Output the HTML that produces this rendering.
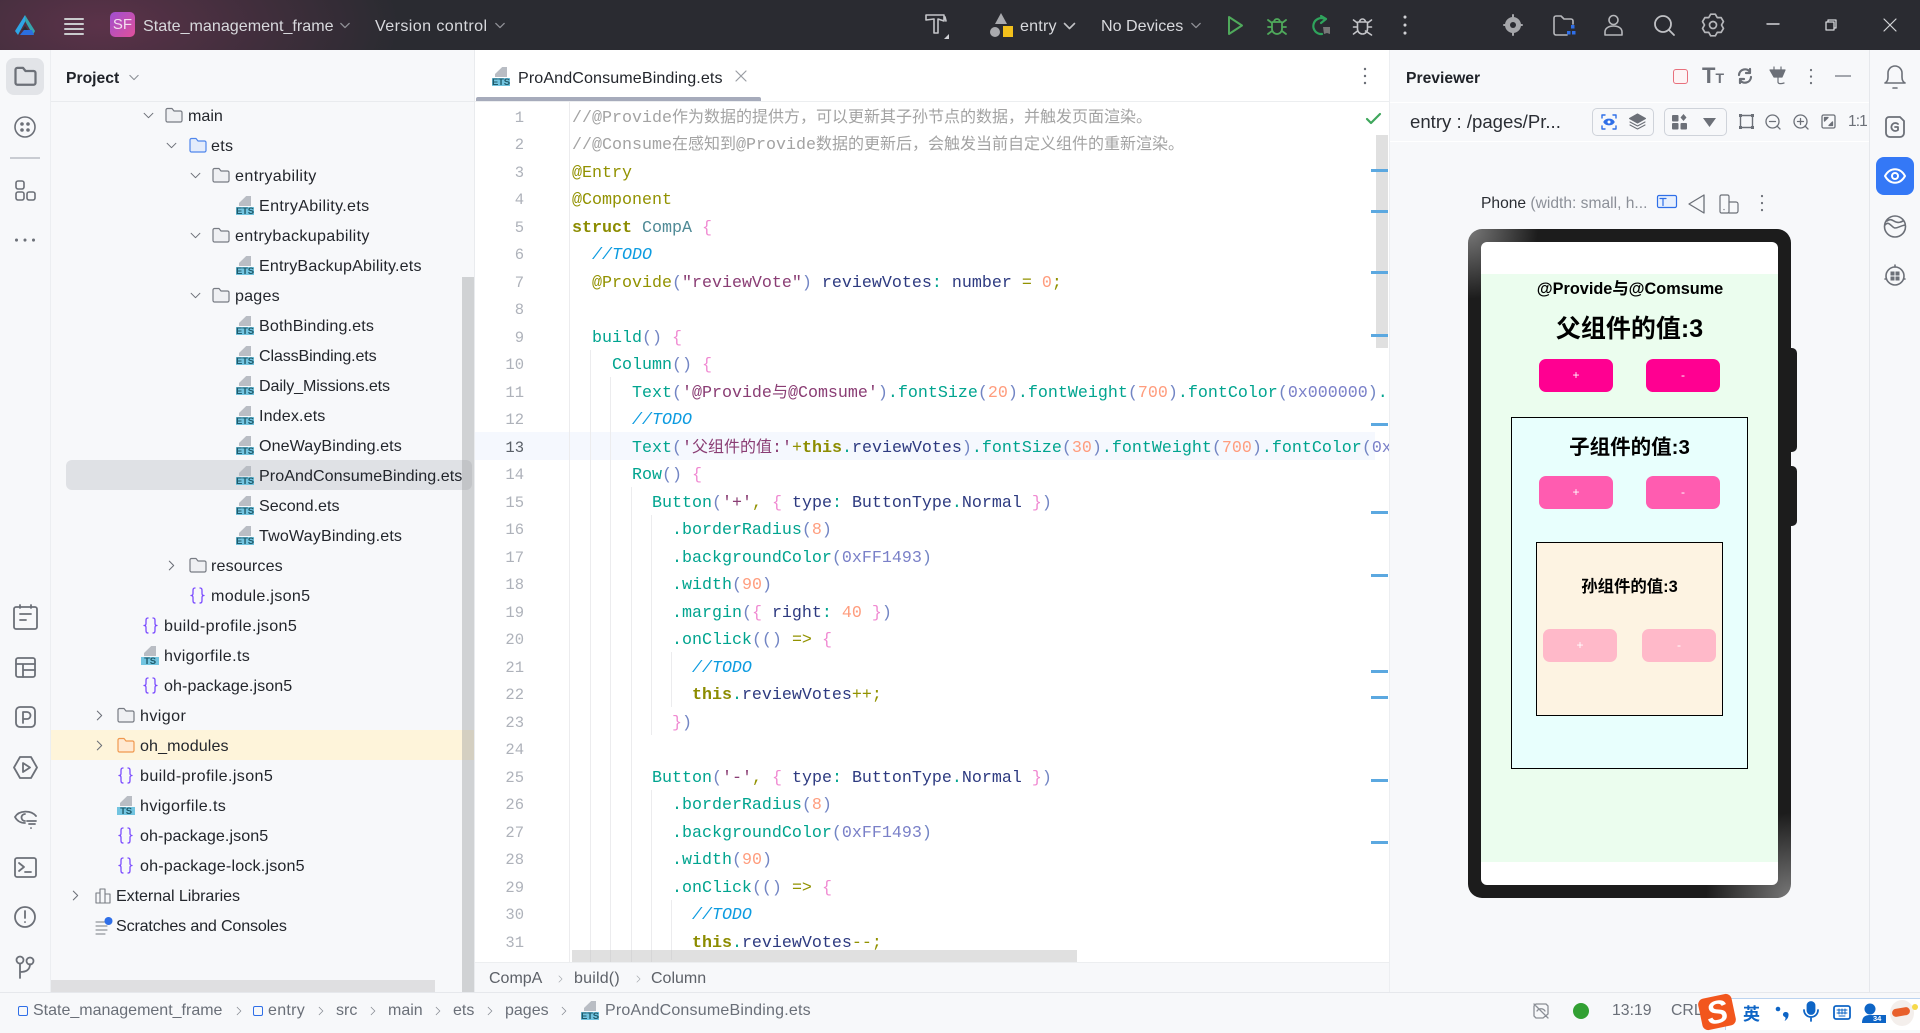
<!DOCTYPE html>
<html><head><meta charset="utf-8"><title>DevEco</title>
<style>
*{box-sizing:border-box}
html,body{margin:0;padding:0;width:1920px;height:1030px;overflow:hidden;background:#f7f8fa;font-family:"Liberation Sans","Noto Sans CJK SC",sans-serif;color:#1f2228}
.a{position:absolute}
svg{position:absolute;overflow:visible;fill:none;stroke:#6c7078;stroke-width:1.6;stroke-linecap:round;stroke-linejoin:round}
.t{position:absolute;height:30px;line-height:30px;font-size:16.1px;white-space:nowrap;color:#23262c}
.w{position:absolute;height:30px;line-height:30px;font-size:16.1px;white-space:nowrap;color:#d8d9dd;top:10.5px}
.ets{position:absolute;width:18px;height:19px;font-style:normal;overflow:hidden}
.ets:before{content:"";position:absolute;left:3px;top:0;width:12px;height:10px;background:#b9bdc4;clip-path:polygon(60% 0,100% 0,100% 100%,0 100%,0 70%)}
.ets b{position:absolute;left:0;top:10.5px;width:18px;height:8.5px;background:#72c4e0;color:#1f5a6a;font-size:9.5px;line-height:9px;text-align:center;font-weight:bold;letter-spacing:-.2px}
#code{position:absolute;left:572px;top:104.5px;width:817px;height:857px;overflow:hidden}
#code div{height:27.5px;line-height:27.5px;font-family:"Liberation Mono","Noto Sans CJK SC",monospace;font-size:16.67px;white-space:pre;color:#2d3a80}
.z{font-size:16px;font-family:"Noto Sans CJK SC",sans-serif;line-height:1}
#code div.g,.g{color:#a3a3a3}#code div.k,.k{color:#929200}.kb{color:#8c8c00;font-weight:bold}.c{color:#00a48f}.p{color:#7285c4}.br{color:#f08ad2}.s{color:#8a3d74}.n{color:#2d3a80}.o{color:#ff9d7e}.h{color:#7a80c8}.i{color:#0c9be0;font-style:italic}.q{color:#4f8a96}
#ln div{position:absolute;left:480px;width:44px;text-align:right;font-family:"Liberation Mono",monospace;font-size:15.5px;height:27.5px;line-height:27.5px;color:#aeb2ba}
#ln{position:absolute;left:0;top:1px}
.ph{position:absolute;text-align:center;font-weight:bold;color:#000;white-space:nowrap}
.btn{position:absolute;border-radius:7px;color:#fff;font-size:12px;text-align:center;line-height:33px;height:33px;width:74px}
.m{position:absolute;left:1371px;width:17px;height:3px;background:#5ba8e0}
.bc{position:absolute;top:996px;height:30px;line-height:30px;font-size:16px;color:#6a6f78;white-space:nowrap}
.gd{position:absolute;width:1px;background:#ececee}
</style></head><body>
<svg width="0" height="0" style="position:absolute">
<symbol id="fo" viewBox="0 0 18 16"><path d="M1 3a1.500 1.500 0 0 1 1.500-1.500h4.500l2 2.500h6.500A1.500 1.500 0 0 1 17 5.500v8a1.500 1.500 0 0 1-1.500 1.500h-13A1.500 1.500 0 0 1 1 13.500z"/></symbol>
<symbol id="js" viewBox="0 0 15 17"><path d="M5 1C3 1 3 2.500 3 4v2.500C3 8 2.200 8.500 1 8.500C2.200 8.500 3 9 3 10.500V13C3 14.500 3 16 5 16M10 1C12 1 12 2.500 12 4v2.500C12 8 12.800 8.500 14 8.500C12.800 8.500 12 9 12 10.500V13C12 14.500 12 16 10 16"/></symbol>
<symbol id="cd" viewBox="0 0 12 8"><path d="M1 1.500l5 5 5-5"/></symbol>
<symbol id="cr" viewBox="0 0 8 12"><path d="M1.500 1l5 5-5 5"/></symbol>
</svg>

<!-- title bar -->
<div class="a" style="left:0;top:0;width:1920px;height:50px;background:radial-gradient(ellipse 300px 130px at 100px 25px,#5b3249 0%,rgba(91,50,73,0) 100%),#2a2b31"></div>
<svg style="left:14px;top:15px;stroke:none" width="22" height="20" viewBox="0 0 22 20"><path fill="#2ea5e6" d="M11 0L1 16l3 4 7-13z"/><path fill="#2fc0c8" d="M11 0l10 16-2 4-8-14z" opacity=".8"/><path fill="#2b6fe0" d="M6 20h14l-2-5H10z"/><path fill="#2a2b31" d="M11 11l3 4H8z"/></svg>
<svg style="left:64px;top:18px;stroke:#c9cacd;stroke-width:2" width="20" height="16"><path d="M1 1h18M1 6h18M1 11h18M1 16h18"/></svg>
<div class="a" style="left:110px;top:12px;width:25px;height:25px;border-radius:5px;background:linear-gradient(135deg,#a04fd0,#e0509a);color:#f4dff0;font-size:15px;line-height:25px;text-align:center">SF</div>
<div class="w" style="left:143px">State_management_frame</div>
<svg style="left:340px;top:22px;stroke:#8f9096" width="10" height="7"><use href="#cd" width="10" height="7"/></svg>
<div class="w" style="left:375px;letter-spacing:.4px">Version control</div>
<svg style="left:495px;top:22px;stroke:#8f9096" width="10" height="7"><use href="#cd" width="10" height="7"/></svg>
<svg style="left:925px;top:13px;stroke:#c4c5c9" width="24" height="26" viewBox="0 0 24 26"><path d="M1 2h18v6M1 2v5l8-1v14h4V6l6 2M20 4l1 4"/><path d="M19 26l5-5v5z" fill="#d0d1d5" stroke="none"/></svg>
<svg style="left:990px;top:12px;stroke:none" width="24" height="26" viewBox="0 0 24 26"><path fill="#a9aaae" d="M11 1l6 11H5z"/><circle cx="5" cy="20" r="5" fill="#a9aaae"/><rect x="13" y="14" width="10" height="11" fill="#f2c01c"/></svg>
<div class="w" style="left:1020px;letter-spacing:.2px">entry</div>
<svg style="left:1063px;top:22px;stroke:#c0c1c5" width="13" height="8"><use href="#cd" width="13" height="8"/></svg>
<div class="w" style="left:1101px">No Devices</div>
<svg style="left:1191px;top:22px;stroke:#8f9096" width="10" height="7"><use href="#cd" width="10" height="7"/></svg>
<svg style="left:1228px;top:16px;stroke:#4fa95b;stroke-width:2" width="16" height="19"><path d="M1 1l13 8.500L1 18z"/></svg>
<svg style="left:1267px;top:14px;stroke:#4fa95b;stroke-width:1.800" width="20" height="22" viewBox="0 0 20 22"><path d="M6 8h8a1 1 0 0 1 1 1v6a5 5 0 0 1-10 0V9a1 1 0 0 1 1-1zM7 8a3 3 0 0 1 6 0M1 6l4 3M19 6l-4 3M1 13h4M15 13h4M1 20l4-3M19 20l-4-3"/></svg>
<svg style="left:1310px;top:15px;stroke:#2fa45c;stroke-width:2.200" width="22" height="21" viewBox="0 0 22 21"><path d="M15 4A8 8 0 1 0 10 19h2"/><path d="M11 1l5 3-5 4" /><path d="M13 12h7v7l-3-1-3 1z" fill="#777" stroke="none"/></svg>
<svg style="left:1352px;top:14px;stroke:#c4c5c9" width="21" height="22" viewBox="0 0 20 22"><path d="M6 8h8a1 1 0 0 1 1 1v6a5 5 0 0 1-10 0V9a1 1 0 0 1 1-1zM7 8a3 3 0 0 1 6 0M1 6l4 3M19 6l-4 3M1 13h4M15 13h4M1 20l4-3M13 17l6 4"/></svg>
<svg style="left:1403px;top:16px;stroke:#d0d1d5;stroke-width:3" width="4" height="18"><path d="M2 1v.1M2 9v.1M2 17v.1"/></svg>
<svg style="left:1503px;top:14px;stroke:#a5a6aa;stroke-width:2" width="20" height="22" viewBox="0 0 20 22"><circle cx="10" cy="11" r="7" fill="#a5a6aa"/><circle cx="10" cy="11" r="3" fill="#2a2b31" stroke="none"/><path d="M10 1v3M10 18v3M1 11h2M17 11h2"/></svg>
<svg style="left:1553px;top:15px;stroke:#b6b7bb" width="24" height="22" viewBox="0 0 24 22"><path d="M14 20H3a2 2 0 0 1-2-2V3a2 2 0 0 1 2-2h5l3 3h7a2 2 0 0 1 2 2v3"/><rect x="18" y="10" width="3.500" height="3.500" fill="#2f6fe8" stroke="none"/><rect x="14" y="16" width="3.500" height="3.500" fill="#2f6fe8" stroke="none"/><rect x="19" y="16" width="3.500" height="3.500" fill="#2f6fe8" stroke="none"/></svg>
<svg style="left:1604px;top:14px;stroke:#b6b7bb" width="19" height="22" viewBox="0 0 19 22"><circle cx="9.500" cy="6" r="4.500"/><path d="M1 21v-3c0-4 4-6 8.500-6s8.500 2 8.500 6v3z"/></svg>
<svg style="left:1653px;top:14px;stroke:#c0c1c5;stroke-width:1.800" width="22" height="22"><circle cx="10" cy="10" r="8"/><path d="M16 16l5 5"/></svg>
<svg style="left:1702px;top:13px;stroke:#b6b7bb;stroke-width:1.700" width="22" height="24" viewBox="0 0 22 24"><path d="M8.700 1.200L13.300 1.200L15.250 4.640L19.170 4.640L21.460 8.600L19.500 12L21.460 15.400L19.170 19.360L15.250 19.360L13.300 22.800L8.700 22.800L6.750 19.360L2.830 19.360L.54 15.400L2.500 12L.54 8.600L2.830 4.640L6.750 4.640z"/><circle cx="11" cy="12" r="3.500"/></svg>
<svg style="left:1767px;top:23px;stroke:#d4d5d9;stroke-width:1.400" width="12" height="2"><path d="M0 1h12"/></svg>
<svg style="left:1825px;top:19px;stroke:#d4d5d9;stroke-width:1.300" width="12" height="12"><path d="M3 3V1h8v8H9M1 3h8v8H1z"/></svg>
<svg style="left:1884px;top:19px;stroke:#d4d5d9;stroke-width:1.200" width="12" height="12"><path d="M0 0l12 12M12 0L0 12"/></svg>

<!-- left rail -->
<div class="a" style="left:50px;top:50px;width:1px;height:943px;background:#eceef1"></div>
<div class="a" style="left:6px;top:58px;width:38px;height:37px;border-radius:8px;background:#e2e4e8"></div>
<svg style="left:14px;top:66px;stroke:#6c7078;stroke-width:1.800" width="23" height="20"><use href="#fo" width="23" height="20"/></svg>
<svg style="left:14px;top:116px" width="22" height="22"><circle cx="11" cy="11" r="10"/><g fill="#6c7078" stroke="none"><circle cx="8" cy="8" r="1.800"/><circle cx="14" cy="8" r="1.800"/><circle cx="8" cy="14" r="1.800"/><circle cx="14" cy="14" r="1.800"/></g></svg>
<div class="a" style="left:10px;top:157px;width:30px;height:2px;background:#c9ccd2"></div>
<svg style="left:15px;top:180px" width="21" height="21"><rect x="1" y="1" width="8" height="8" rx="2"/><rect x="1" y="12" width="8" height="8" rx="2"/><rect x="12" y="12" width="8" height="8" rx="2"/></svg>
<svg style="left:15px;top:238px;stroke-width:3" width="20" height="4"><path d="M1.500 2v.1M10 2v.1M18.500 2v.1"/></svg>
<svg style="left:13px;top:604px;stroke-width:1.800" width="25" height="26"><rect x="1" y="3" width="23" height="22" rx="2"/><path d="M7 1v3M18 1v3M7 10h11M7 16h6"/></svg>
<svg style="left:15px;top:657px;stroke-width:1.800" width="21" height="21"><rect x="1" y="1" width="19" height="19" rx="2"/><path d="M1 7h19M8 7v13M8 13h12"/></svg>
<svg style="left:15px;top:706px;stroke-width:1.800" width="21" height="22"><path d="M5 1h11a4 4 0 0 1 4 4v12a4 4 0 0 1-4 4H5a4 4 0 0 1-4-4V5a4 4 0 0 1 4-4zM8 17V6h4a3 3 0 0 1 0 7H8"/></svg>
<svg style="left:13px;top:756px;stroke-width:1.800" width="25" height="23"><path d="M7 1h11l6 10.500L18 22H7L1 11.500zM10 7l7 4.500-7 4.500z"/></svg>
<svg style="left:14px;top:809px;stroke-width:1.800" width="24" height="20"><path d="M1 8C5 1 17 1 22 7M1 8c2 4 6 6 10 6M11 5a3.500 3.500 0 0 0 0 7M13 12h9M15 15h6M17 19v.1"/></svg>
<svg style="left:14px;top:857px;stroke-width:1.800" width="23" height="21"><rect x="1" y="1" width="21" height="19" rx="2"/><path d="M5 6l5 4-5 4M11 15h6"/></svg>
<svg style="left:14px;top:906px;stroke-width:1.800" width="22" height="22"><circle cx="11" cy="11" r="10"/><path d="M11 5v7M11 16v.1"/></svg>
<svg style="left:15px;top:955px;stroke-width:1.800" width="20" height="24"><circle cx="5" cy="5" r="3.500"/><circle cx="15" cy="6" r="3.500"/><path d="M5 9v14M5 17c6 0 10-2 10-8"/></svg>

<!-- project panel -->
<div class="a" style="left:66px;top:64px;font-weight:bold;font-size:15.7px;line-height:30px;color:#1f2228">Project</div>
<svg style="left:129px;top:74px;stroke:#8c9096;stroke-width:1.300" width="10" height="7"><use href="#cd" width="10" height="7"/></svg>
<div class="a" style="left:51px;top:101px;width:424px;height:1px;background:#e9ebee"></div>
<div class="a" style="left:66px;top:460px;width:406px;height:30px;border-radius:6px;background:#dfe1e5"></div>
<div class="a" style="left:51px;top:730px;width:423px;height:30px;background:#fef4da"></div>
<div class="a" style="left:462px;top:277px;width:12px;height:715px;background:rgba(150,152,156,.4)"></div>
<div class="a" style="left:51px;top:980px;width:384px;height:12px;background:#dfdfe1"></div>
<div class="a" style="left:474px;top:50px;width:1px;height:943px;background:#e9ebee"></div>

<svg style="left:143px;top:112px;stroke:#6c7078;stroke-width:1.200" width="11" height="7"><use href="#cd" width="11" height="7"/></svg>
<svg style="left:165px;top:107px;fill:#eff0f3;stroke:#777b83;stroke-width:1.200" width="18" height="16"><use href="#fo" width="18" height="16"/></svg>
<div class="t" style="left:188px;top:101px">main</div>
<svg style="left:166px;top:142px;stroke:#6c7078;stroke-width:1.200" width="11" height="7"><use href="#cd" width="11" height="7"/></svg>
<svg style="left:189px;top:137px;fill:#e4ecfb;stroke:#4f86ec;stroke-width:1.200" width="18" height="16"><use href="#fo" width="18" height="16"/></svg>
<div class="t" style="left:211px;top:131px;letter-spacing:.3px">ets</div>
<svg style="left:190px;top:172px;stroke:#6c7078;stroke-width:1.200" width="11" height="7"><use href="#cd" width="11" height="7"/></svg>
<svg style="left:212px;top:167px;fill:#eff0f3;stroke:#777b83;stroke-width:1.200" width="18" height="16"><use href="#fo" width="18" height="16"/></svg>
<div class="t" style="left:235px;top:161px;letter-spacing:.4px">entryability</div>
<i class="ets" style="left:236px;top:196px"><b>ETS</b></i>
<div class="t" style="left:259px;top:191px;letter-spacing:.33px">EntryAbility.ets</div>
<svg style="left:190px;top:232px;stroke:#6c7078;stroke-width:1.200" width="11" height="7"><use href="#cd" width="11" height="7"/></svg>
<svg style="left:212px;top:227px;fill:#eff0f3;stroke:#777b83;stroke-width:1.200" width="18" height="16"><use href="#fo" width="18" height="16"/></svg>
<div class="t" style="left:235px;top:221px;letter-spacing:.33px">entrybackupability</div>
<i class="ets" style="left:236px;top:256px"><b>ETS</b></i>
<div class="t" style="left:259px;top:251px;letter-spacing:.17px">EntryBackupAbility.ets</div>
<svg style="left:190px;top:292px;stroke:#6c7078;stroke-width:1.200" width="11" height="7"><use href="#cd" width="11" height="7"/></svg>
<svg style="left:212px;top:287px;fill:#eff0f3;stroke:#777b83;stroke-width:1.200" width="18" height="16"><use href="#fo" width="18" height="16"/></svg>
<div class="t" style="left:235px;top:281px;letter-spacing:.2px">pages</div>
<i class="ets" style="left:236px;top:316px"><b>ETS</b></i><div class="t" style="left:259px;top:311px;letter-spacing:.16px">BothBinding.ets</div>
<i class="ets" style="left:236px;top:346px"><b>ETS</b></i><div class="t" style="left:259px;top:341px;letter-spacing:-.15px">ClassBinding.ets</div>
<i class="ets" style="left:236px;top:376px"><b>ETS</b></i><div class="t" style="left:259px;top:371px;letter-spacing:-.13px">Daily_Missions.ets</div>
<i class="ets" style="left:236px;top:406px"><b>ETS</b></i><div class="t" style="left:259px;top:401px;letter-spacing:.13px">Index.ets</div>
<i class="ets" style="left:236px;top:436px"><b>ETS</b></i><div class="t" style="left:259px;top:431px;letter-spacing:.07px">OneWayBinding.ets</div>
<i class="ets" style="left:236px;top:466px"><b>ETS</b></i><div class="t" style="left:259px;top:461px;letter-spacing:.05px">ProAndConsumeBinding.ets</div>
<i class="ets" style="left:236px;top:496px"><b>ETS</b></i><div class="t" style="left:259px;top:491px">Second.ets</div>
<i class="ets" style="left:236px;top:526px"><b>ETS</b></i><div class="t" style="left:259px;top:521px;letter-spacing:.14px">TwoWayBinding.ets</div>
<svg style="left:168px;top:560px;stroke:#6c7078;stroke-width:1.200" width="7" height="11"><use href="#cr" width="7" height="11"/></svg>
<svg style="left:189px;top:557px;fill:#eff0f3;stroke:#777b83;stroke-width:1.200" width="18" height="16"><use href="#fo" width="18" height="16"/></svg>
<div class="t" style="left:211px;top:551px;letter-spacing:.13px">resources</div>
<svg style="left:190px;top:587px;stroke:#7c4dff;stroke-width:1.300" width="15" height="17"><use href="#js" width="15" height="17"/></svg>
<div class="t" style="left:211px;top:581px;letter-spacing:.3px">module.json5</div>
<svg style="left:143px;top:617px;stroke:#7c4dff;stroke-width:1.300" width="15" height="17"><use href="#js" width="15" height="17"/></svg>
<div class="t" style="left:164px;top:611px;letter-spacing:.37px">build-profile.json5</div>
<i class="ets" style="left:141px;top:646px"><b>TS</b></i><div class="t" style="left:164px;top:641px;letter-spacing:.37px">hvigorfile.ts</div>
<svg style="left:143px;top:677px;stroke:#7c4dff;stroke-width:1.300" width="15" height="17"><use href="#js" width="15" height="17"/></svg>
<div class="t" style="left:164px;top:671px;letter-spacing:.08px">oh-package.json5</div>
<svg style="left:96px;top:710px;stroke:#6c7078;stroke-width:1.200" width="7" height="11"><use href="#cr" width="7" height="11"/></svg>
<svg style="left:117px;top:707px;fill:#eff0f3;stroke:#777b83;stroke-width:1.200" width="18" height="16"><use href="#fo" width="18" height="16"/></svg>
<div class="t" style="left:140px;top:701px;letter-spacing:.4px">hvigor</div>
<svg style="left:96px;top:740px;stroke:#6c7078;stroke-width:1.200" width="7" height="11"><use href="#cr" width="7" height="11"/></svg>
<svg style="left:117px;top:737px;fill:#ffe9d2;stroke:#f0994f;stroke-width:1.200" width="18" height="16"><use href="#fo" width="18" height="16"/></svg>
<div class="t" style="left:140px;top:731px;letter-spacing:.1px">oh_modules</div>
<svg style="left:118px;top:767px;stroke:#7c4dff;stroke-width:1.300" width="15" height="17"><use href="#js" width="15" height="17"/></svg>
<div class="t" style="left:140px;top:761px;letter-spacing:.37px">build-profile.json5</div>
<i class="ets" style="left:117px;top:796px"><b>TS</b></i><div class="t" style="left:140px;top:791px;letter-spacing:.37px">hvigorfile.ts</div>
<svg style="left:118px;top:827px;stroke:#7c4dff;stroke-width:1.300" width="15" height="17"><use href="#js" width="15" height="17"/></svg>
<div class="t" style="left:140px;top:821px;letter-spacing:.08px">oh-package.json5</div>
<svg style="left:118px;top:857px;stroke:#7c4dff;stroke-width:1.300" width="15" height="17"><use href="#js" width="15" height="17"/></svg>
<div class="t" style="left:140px;top:851px;letter-spacing:.18px">oh-package-lock.json5</div>
<svg style="left:72px;top:890px;stroke:#6c7078;stroke-width:1.200" width="7" height="11"><use href="#cr" width="7" height="11"/></svg>
<svg style="left:95px;top:888px;stroke:#777b83;stroke-width:1.100" width="17" height="16"><path d="M1 5h4v10H1zM5 1h5v14H5zM10 6h5v9h-5z"/></svg>
<div class="t" style="left:116px;top:881px;letter-spacing:-.07px">External Libraries</div>
<svg style="left:95px;top:917px;stroke:#777b83;stroke-width:1.100" width="18" height="18"><path d="M1 5h9M1 9h11M1 13h11M1 17h9"/><circle cx="13.500" cy="4" r="4" fill="#2f6fe8" stroke="none"/></svg>
<div class="t" style="left:116px;top:911px;letter-spacing:-.17px">Scratches and Consoles</div>

<!-- editor -->
<div class="a" style="left:475px;top:50px;width:914px;height:912px;background:#fff"></div>
<div class="a" style="left:475px;top:101px;width:914px;height:1px;background:#eceef0"></div>
<div class="a" style="left:476px;top:97px;width:285px;height:4px;background:#a6abbb;border-radius:2px 2px 0 0"></div>
<i class="ets" style="left:492px;top:67px"><b>ETS</b></i>
<div class="t" style="left:518px;top:63px;letter-spacing:.1px">ProAndConsumeBinding.ets</div>
<svg style="left:736px;top:71px;stroke:#9a9da3;stroke-width:1.200" width="10" height="10"><path d="M0 0l10 10M10 0L0 10"/></svg>
<svg style="left:1363px;top:68px;stroke:#6c7078;stroke-width:2.400" width="4" height="16"><path d="M2 1v.1M2 8v.1M2 15v.1"/></svg>
<div class="a" style="left:475px;top:432px;width:900px;height:28px;background:#f5f8fe"></div>
<div class="gd" style="left:569px;top:102px;height:860px"></div>
<div class="gd" style="left:590px;top:350px;height:612px"></div>
<div class="gd" style="left:610px;top:377px;height:585px"></div>
<div class="gd" style="left:631px;top:487px;height:475px"></div>
<div class="gd" style="left:651px;top:515px;height:220px"></div>
<div class="gd" style="left:651px;top:790px;height:172px"></div>
<div class="gd" style="left:671px;top:652px;height:55px"></div>
<div class="gd" style="left:671px;top:900px;height:60px"></div>

<div id="ln">
<div style="top:103.5px">1</div><div style="top:131px">2</div><div style="top:158.5px">3</div><div style="top:186px">4</div><div style="top:213.5px">5</div><div style="top:241px">6</div><div style="top:268.5px">7</div><div style="top:296px">8</div><div style="top:323.5px">9</div><div style="top:351px">10</div><div style="top:378.5px">11</div><div style="top:406px">12</div><div style="top:433.5px;color:#5a6068">13</div><div style="top:461px">14</div><div style="top:488.5px">15</div><div style="top:516px">16</div><div style="top:543.5px">17</div><div style="top:571px">18</div><div style="top:598.5px">19</div><div style="top:626px">20</div><div style="top:653.5px">21</div><div style="top:681px">22</div><div style="top:708.5px">23</div><div style="top:736px">24</div><div style="top:763.5px">25</div><div style="top:791px">26</div><div style="top:818.5px">27</div><div style="top:846px">28</div><div style="top:873.5px">29</div><div style="top:901px">30</div><div style="top:928.5px">31</div>
</div>
<div id="code">
<div class="g">//@Provide<span class="z">作为数据的提供方，可以更新其子孙节点的数据，并触发页面渲染。</span></div>
<div class="g">//@Consume<span class="z">在感知到</span>@Provide<span class="z">数据的更新后，会触发当前自定义组件的重新渲染。</span></div>
<div class="k">@Entry</div>
<div class="k">@Component</div>
<div><span class="kb">struct</span> <span class="q">CompA</span> <span class="br">{</span></div>
<div>  <span class="i">//TODO</span></div>
<div>  <span class="k">@Provide</span><span class="p">(</span><span class="s">"reviewVote"</span><span class="p">)</span> <span class="n">reviewVotes</span><span class="c">:</span> <span class="n">number</span> <span class="k">=</span> <span class="o">0</span><span class="k">;</span></div>
<div> </div>
<div>  <span class="c">build</span><span class="p">()</span> <span class="br">{</span></div>
<div>    <span class="c">Column</span><span class="p">()</span> <span class="br">{</span></div>
<div>      <span class="c">Text</span><span class="p">(</span><span class="s">'@Provide<span class="z">与</span>@Comsume'</span><span class="p">)</span><span class="c">.fontSize</span><span class="p">(</span><span class="o">20</span><span class="p">)</span><span class="c">.fontWeight</span><span class="p">(</span><span class="o">700</span><span class="p">)</span><span class="c">.fontColor</span><span class="p">(</span><span class="h">0x000000</span><span class="p">)</span><span class="c">.</span></div>
<div>      <span class="i">//TODO</span></div>
<div>      <span class="c">Text</span><span class="p">(</span><span class="s">'<span class="z">父组件的值</span>:'</span><span class="k">+</span><span class="kb">this</span><span class="c">.</span><span class="n">reviewVotes</span><span class="p">)</span><span class="c">.fontSize</span><span class="p">(</span><span class="o">30</span><span class="p">)</span><span class="c">.fontWeight</span><span class="p">(</span><span class="o">700</span><span class="p">)</span><span class="c">.fontColor</span><span class="p">(</span><span class="h">0x</span></div>
<div>      <span class="c">Row</span><span class="p">()</span> <span class="br">{</span></div>
<div>        <span class="c">Button</span><span class="p">(</span><span class="s">'+'</span><span class="k">,</span> <span class="br">{</span> <span class="n">type</span><span class="c">:</span> <span class="n">ButtonType</span><span class="c">.</span><span class="n">Normal</span> <span class="br">}</span><span class="p">)</span></div>
<div>          <span class="c">.borderRadius</span><span class="p">(</span><span class="o">8</span><span class="p">)</span></div>
<div>          <span class="c">.backgroundColor</span><span class="p">(</span><span class="h">0xFF1493</span><span class="p">)</span></div>
<div>          <span class="c">.width</span><span class="p">(</span><span class="o">90</span><span class="p">)</span></div>
<div>          <span class="c">.margin</span><span class="p">(</span><span class="br">{</span> <span class="n">right</span><span class="c">:</span> <span class="o">40</span> <span class="br">}</span><span class="p">)</span></div>
<div>          <span class="c">.onClick</span><span class="p">(()</span> <span class="k">=&gt;</span> <span class="br">{</span></div>
<div>            <span class="i">//TODO</span></div>
<div>            <span class="kb">this</span><span class="c">.</span><span class="n">reviewVotes</span><span class="k">++;</span></div>
<div>          <span class="br">}</span><span class="p">)</span></div>
<div> </div>
<div>        <span class="c">Button</span><span class="p">(</span><span class="s">'-'</span><span class="k">,</span> <span class="br">{</span> <span class="n">type</span><span class="c">:</span> <span class="n">ButtonType</span><span class="c">.</span><span class="n">Normal</span> <span class="br">}</span><span class="p">)</span></div>
<div>          <span class="c">.borderRadius</span><span class="p">(</span><span class="o">8</span><span class="p">)</span></div>
<div>          <span class="c">.backgroundColor</span><span class="p">(</span><span class="h">0xFF1493</span><span class="p">)</span></div>
<div>          <span class="c">.width</span><span class="p">(</span><span class="o">90</span><span class="p">)</span></div>
<div>          <span class="c">.onClick</span><span class="p">(()</span> <span class="k">=&gt;</span> <span class="br">{</span></div>
<div>            <span class="i">//TODO</span></div>
<div>            <span class="kb">this</span><span class="c">.</span><span class="n">reviewVotes</span><span class="k">--;</span></div>
</div>
<div class="a" style="left:572px;top:950px;width:505px;height:12px;background:rgba(190,190,190,.48)"></div>
<div class="a" style="left:1376px;top:135px;width:12px;height:213px;background:#e0e0e0"></div>
<svg style="left:1366px;top:113px;stroke:#3fa75c;stroke-width:2.200" width="15" height="12"><path d="M1 6l4 4 9-9"/></svg>
<div class="m" style="top:169px"></div><div class="m" style="top:210px"></div><div class="m" style="top:271px"></div><div class="m" style="top:334px"></div><div class="m" style="top:423px"></div><div class="m" style="top:511px"></div><div class="m" style="top:574px"></div><div class="m" style="top:670px"></div><div class="m" style="top:696px"></div><div class="m" style="top:779px"></div><div class="m" style="top:841px"></div>

<!-- editor breadcrumb -->
<div class="a" style="left:475px;top:962px;width:914px;height:1px;background:#eceef0"></div>
<div class="a" style="left:489px;top:964px;font-size:16px;line-height:30px;color:#5d6168">CompA</div>
<svg style="left:558px;top:975px;stroke:#a5a8ae;stroke-width:1" width="5" height="8"><use href="#cr" width="5" height="8"/></svg>
<div class="a" style="left:574px;top:964px;font-size:16px;line-height:30px;color:#5d6168;letter-spacing:.2px">build()</div>
<svg style="left:636px;top:975px;stroke:#a5a8ae;stroke-width:1" width="5" height="8"><use href="#cr" width="5" height="8"/></svg>
<div class="a" style="left:651px;top:964px;font-size:16px;line-height:30px;color:#5d6168">Column</div>

<!-- previewer -->
<div class="a" style="left:1389px;top:50px;width:1px;height:943px;background:#eceef1"></div>
<div class="a" style="left:1390px;top:102px;width:479px;height:1px;background:#fff"></div>
<div class="a" style="left:1390px;top:141px;width:479px;height:1px;background:#fff"></div>
<div class="a" style="left:1406px;top:64px;font-weight:bold;font-size:15.7px;line-height:30px;color:#1f2228">Previewer</div>
<div class="a" style="left:1673px;top:69px;width:15px;height:15px;border:1.500px solid #e8707c;border-radius:3px;background:#fdf4f5"></div>
<div class="a" style="left:1702px;top:62px;font-size:22px;line-height:28px;font-weight:bold;color:#6c7078">T<span style="font-size:14px">T</span></div>
<svg style="left:1737px;top:68px;stroke:#6c7078;stroke-width:2.200" width="16" height="16" viewBox="0 0 16 16"><path d="M2 7a6 6 0 0 1 11-3M14 9a6 6 0 0 1-11 3M13 1v4H9M3 15v-4h4"/></svg>
<svg style="left:1769px;top:67px;stroke:#6c7078;stroke-width:1.200" width="18" height="18" viewBox="0 0 18 18"><path d="M1 3h15l-3 7H5z" fill="#6c7078"/><path d="M5 0v3M12 0v3M9 10v5c0 2 3 2 6 1"/></svg>
<svg style="left:1809px;top:69px;stroke:#6c7078;stroke-width:2.200" width="4" height="15"><path d="M2 1v.1M2 7.500v.1M2 14v.1"/></svg>
<div class="a" style="left:1835px;top:75px;width:16px;height:1.500px;background:#a3a6ad"></div>

<div class="a" style="left:1410px;top:107px;font-size:18.6px;line-height:30px;color:#2a2d33">entry : /pages/Pr...</div>
<div class="a" style="left:1592px;top:108px;width:62px;height:28px;border:1px solid #cfd3da;border-radius:5px"></div>
<svg style="left:1601px;top:114px;stroke:#2f6fe8;stroke-width:1.400" width="16" height="16" viewBox="0 0 16 16"><path d="M1 4V1h3M12 1h3v3M15 12v3h-3M4 15H1v-3"/><path d="M3 8c2-3.500 8-3.500 10 0c-2 3.500-8 3.500-10 0z" fill="#2f6fe8"/><circle cx="8" cy="8" r="1.500" fill="#fff" stroke="none"/></svg>
<svg style="left:1629px;top:114px;stroke:#6c7078;stroke-width:1.100" width="17" height="16" viewBox="0 0 17 16"><path d="M8.500 0l8 4.500-8 4.500-8-4.500z" fill="#6c7078"/><path d="M1 8l7.500 4L16 8M1 11l7.500 4L16 11"/></svg>
<div class="a" style="left:1664px;top:108px;width:63px;height:28px;border:1px solid #cfd3da;border-radius:5px"></div>
<svg style="left:1672px;top:114px;stroke:none;fill:#6c7078" width="16" height="16"><rect x="0" y="1" width="6.500" height="6.500" rx="1"/><rect x="0" y="9" width="6.500" height="6.500" rx="1"/><rect x="8.500" y="9" width="6.500" height="6.500" rx="1"/><path d="M11.500 0l3 3.500-3 3.500-3-3.500z"/></svg>
<svg style="left:1703px;top:118px;stroke:none;fill:#6c7078" width="13" height="9"><path d="M0 0h13L6.500 9z"/></svg>
<svg style="left:1739px;top:114px;stroke:#6c7078;stroke-width:1.400" width="15" height="15"><rect x="1.500" y="1.500" width="12" height="12"/><g fill="#6c7078" stroke="none"><rect x="0" y="0" width="3" height="3"/><rect x="12" y="0" width="3" height="3"/><rect x="0" y="12" width="3" height="3"/><rect x="12" y="12" width="3" height="3"/></g></svg>
<svg style="left:1765px;top:114px;stroke:#6c7078;stroke-width:1.300" width="16" height="16"><circle cx="7.500" cy="7.500" r="6.500"/><path d="M12 12l3 3M4.500 7.500h6"/></svg>
<svg style="left:1793px;top:114px;stroke:#6c7078;stroke-width:1.300" width="16" height="16"><circle cx="7.500" cy="7.500" r="6.500"/><path d="M12 12l3 3M4.500 7.500h6M7.500 4.500v6"/></svg>
<svg style="left:1821px;top:114px;stroke:#6c7078;stroke-width:1.300" width="15" height="15"><rect x="1" y="1" width="13" height="13" rx="1.500"/><path d="M3.500 7V3.500H7L3.500 7zM11.500 8v3.500H8l3.500-3.500z" fill="#6c7078"/></svg>
<div class="a" style="left:1848px;top:110px;font-size:15.5px;line-height:24px;color:#6c7078;letter-spacing:-.9px;white-space:nowrap">1:1</div>

<div class="a" style="left:1481px;top:188.5px;font-size:15.6px;line-height:30px;white-space:nowrap;color:#8c9098"><span style="color:#2a2d33">Phone</span> (width: small, h...</div>
<svg style="left:1657px;top:195px;stroke:#2f6fe8;stroke-width:1.200" width="20" height="14"><rect x=".5" y=".5" width="19" height="12" rx="1.500" fill="#e8f0fd"/><path d="M3 3.500h6M6 3.500v7"/></svg>
<svg style="left:1688px;top:194px;stroke:#6c7078;stroke-width:1.300" width="17" height="20"><path d="M16 1v18L1 10z"/></svg>
<svg style="left:1719px;top:194px;stroke:#6c7078;stroke-width:1.200" width="20" height="20"><rect x="1" y="1" width="9" height="18" rx="1.500"/><path d="M10 8h7a2 2 0 0 1 2 2v7a2 2 0 0 1-2 2h-7"/><path d="M5 15.500v.1"/></svg>
<svg style="left:1760px;top:195px;stroke:#6c7078;stroke-width:2.200" width="4" height="16"><path d="M2 1v.1M2 8v.1M2 15v.1"/></svg>

<!-- device -->
<div class="a" style="left:1785px;top:348px;width:12px;height:104px;border-radius:0 5px 5px 0;background:#1c1c1c"></div>
<div class="a" style="left:1785px;top:466px;width:12px;height:60px;border-radius:0 5px 5px 0;background:#1c1c1c"></div>
<div class="a" style="left:1468px;top:229px;width:323px;height:669px;border-radius:14px;background:radial-gradient(circle 70px at 0 0,#7a7a7a,rgba(28,28,28,0)),radial-gradient(circle 85px at 100% 100%,#787878,rgba(28,28,28,0)),#1c1c1c"></div>
<div class="a" style="left:1481px;top:242px;width:297px;height:643px;border-radius:6px;background:#fff"></div>
<div class="a" style="left:1481px;top:274px;width:297px;height:588px;background:#ebfdee"></div>
<div class="ph" style="left:1482px;top:276.5px;width:296px;font-size:16.3px;line-height:24px">@Provide与@Comsume</div>
<div class="ph" style="left:1481.5px;top:311px;width:296px;font-size:25px;line-height:36px">父组件的值:3</div>
<div class="btn" style="left:1539px;top:359px;background:#ff0091">+</div>
<div class="btn" style="left:1646px;top:359px;background:#ff0091">-</div>
<div class="a" style="left:1511px;top:417px;width:237px;height:352px;border:1.500px solid #000;background:#e8fffd"></div>
<div class="ph" style="left:1511px;top:433px;width:237px;font-size:20.5px;line-height:30px">子组件的值:3</div>
<div class="btn" style="left:1539px;top:476px;background:#ff5cb0">+</div>
<div class="btn" style="left:1646px;top:476px;background:#ff5cb0">-</div>
<div class="a" style="left:1536px;top:542px;width:187px;height:174px;border:1.200px solid #000;background:#fdf3e2"></div>
<div class="ph" style="left:1536px;top:575px;width:187px;font-size:16.4px;line-height:24px">孙组件的值:3</div>
<div class="btn" style="left:1543px;top:629px;background:#ffb9c9">+</div>
<div class="btn" style="left:1642px;top:629px;background:#ffb9c9">-</div>

<!-- right rail -->
<div class="a" style="left:1869px;top:50px;width:1px;height:943px;background:#e6e8ec"></div>
<svg style="left:1884px;top:64px" width="22" height="25" viewBox="0 0 22 25"><path d="M1 19c2-1 3-3 3-6V9a7 7 0 0 1 14 0v4c0 3 1 5 3 6zM9 24h4"/></svg>
<svg style="left:1885px;top:116px;stroke-width:1.800" width="20" height="22" viewBox="0 0 20 22"><path d="M4 1h11l4 4v12a4 4 0 0 1-4 4H5a4 4 0 0 1-4-4V4a3 3 0 0 1 3-3z"/><path d="M13 8a4 4 0 1 0 0 6v-3h-3" /></svg>
<div class="a" style="left:1876px;top:157px;width:38px;height:38px;border-radius:8px;background:#3478f6"></div>
<svg style="left:1884px;top:168px;stroke:#fff;stroke-width:2" width="22" height="16"><path d="M1 8c5-9 15-9 20 0c-5 9-15 9-20 0z"/><circle cx="11" cy="8" r="3"/></svg>
<svg style="left:1884px;top:215px;stroke-width:1.600" width="22" height="23"><circle cx="11" cy="11.500" r="10.500"/><path d="M1 10c4-5 7 3 10 3s5-2 10-3M3 6c4-3 6 0 9 1s5 0 7-1"/></svg>
<svg style="left:1884px;top:265px;stroke-width:1.600" width="22" height="22"><circle cx="11" cy="11" r="9"/><path d="M11 0v2M1 14H2M20 14h1"/><g fill="#6c7078" stroke="none"><rect x="6.500" y="6.500" width="4" height="4"/><rect x="11.500" y="6.500" width="4" height="4"/><rect x="6.500" y="11.500" width="4" height="4"/><rect x="11.500" y="11.500" width="4" height="4"/></g></svg>

<!-- status bar -->
<div class="a" style="left:0;top:992px;width:1920px;height:1px;background:#e6e8ec"></div>
<div class="a" style="left:0;top:993px;width:1920px;height:37px;background:#f7f8fa"></div>
<div class="a" style="left:18px;top:1006px;width:10px;height:10px;border:1.500px solid #2f6fe8;border-radius:2px"></div>
<div class="bc" style="left:33px">State_management_frame</div>
<svg style="left:236px;top:1006px;stroke:#8a8e95;stroke-width:1.100" width="6" height="10"><use href="#cr" width="6" height="10"/></svg>
<div class="a" style="left:253px;top:1006px;width:10px;height:10px;border:1.500px solid #2f6fe8;border-radius:2px"></div>
<div class="bc" style="left:268px;letter-spacing:.3px">entry</div>
<svg style="left:318px;top:1006px;stroke:#8a8e95;stroke-width:1.100" width="6" height="10"><use href="#cr" width="6" height="10"/></svg>
<div class="bc" style="left:336px">src</div>
<svg style="left:370px;top:1006px;stroke:#8a8e95;stroke-width:1.100" width="6" height="10"><use href="#cr" width="6" height="10"/></svg>
<div class="bc" style="left:388px">main</div>
<svg style="left:435px;top:1006px;stroke:#8a8e95;stroke-width:1.100" width="6" height="10"><use href="#cr" width="6" height="10"/></svg>
<div class="bc" style="left:453px">ets</div>
<svg style="left:487px;top:1006px;stroke:#8a8e95;stroke-width:1.100" width="6" height="10"><use href="#cr" width="6" height="10"/></svg>
<div class="bc" style="left:505px">pages</div>
<svg style="left:561px;top:1006px;stroke:#8a8e95;stroke-width:1.100" width="6" height="10"><use href="#cr" width="6" height="10"/></svg>
<i class="ets" style="left:581px;top:1001px"><b>ETS</b></i>
<div class="bc" style="left:605px;letter-spacing:.2px">ProAndConsumeBinding.ets</div>
<svg style="left:1533px;top:1003px;stroke:#8a8e95;stroke-width:1.300" width="16" height="16"><path d="M3 1h10l2 2v8l-5 4H3l-2-2V3zM1 1l14 14M4 8c2-3 6-3 8 0"/></svg>
<div class="a" style="left:1573px;top:1003px;width:16px;height:16px;border-radius:50%;background:#32a033"></div>
<div class="a" style="left:1612px;top:996px;font-size:15.8px;line-height:30px;color:#6a6f78">13:19</div>
<div class="a" style="left:1671px;top:996px;font-size:15.8px;line-height:30px;color:#6a6f78">CRLF</div>
<!-- IME -->
<div class="a" style="left:1725px;top:998px;width:195px;height:32px;background:#fff;border:1px solid #bcd4f0;border-right:0;border-bottom:0;border-radius:3px 0 0 0"></div>
<div class="a" style="left:1700px;top:996px;width:34px;height:32px;background:#f2561d;border-radius:6px;transform:rotate(-12deg);color:#fff;font-weight:bold;font-size:32px;line-height:32px;text-align:center;font-style:italic">S</div>
<div class="a" style="left:1743px;top:1001px;font-size:17px;line-height:24px;font-weight:bold;color:#0e65c6;font-family:'Noto Sans CJK SC',sans-serif">英</div>
<svg style="left:1775px;top:1006px;stroke:none;fill:#0e65c6" width="16" height="16"><circle cx="3" cy="3" r="2.300"/><path d="M11 6a2.500 2.500 0 0 1 2.500 3c0 3-2 5-4 6 1-2 1.500-3 .5-4a2.500 2.500 0 0 1 1-5z"/></svg>
<svg style="left:1803px;top:1001px;stroke:#0e65c6;stroke-width:1.800" width="16" height="21"><rect x="4.500" y="1" width="7" height="12" rx="3.500" fill="#0e65c6"/><path d="M1 9a7 7 0 0 0 14 0M8 16v4"/></svg>
<svg style="left:1833px;top:1005px;stroke:#0e65c6;stroke-width:1.800" width="18" height="15"><rect x="1" y="1" width="16" height="13" rx="2"/><path d="M4 5h10M4 8h10M6 11h6M6 4v5M9 4v5M12 4v5" stroke-width="1"/></svg>
<svg style="left:1862px;top:1003px;stroke:none;fill:#0e65c6" width="24" height="20"><circle cx="8" cy="6" r="5.500"/><path d="M0 20c0-6 3-8 8-8s6 1 7 2v6z"/><rect x="11" y="12" width="13" height="8" fill="#0e65c6"/></svg>
<div class="a" style="left:1873px;top:1015px;font-size:7.500px;line-height:8px;font-weight:bold;color:#fff">34</div>
<div class="a" style="left:1890px;top:1000px;width:24px;height:26px;border-radius:50%;background:#f4efec"></div>
<div class="a" style="left:1892px;top:1008px;width:18px;height:8px;border-radius:4px;background:#e8602c;transform:rotate(-10deg)"></div>
<div class="a" style="left:1912px;top:1004px;width:6px;height:6px;background:#f6d94a;border-radius:50%"></div>
</body></html>
